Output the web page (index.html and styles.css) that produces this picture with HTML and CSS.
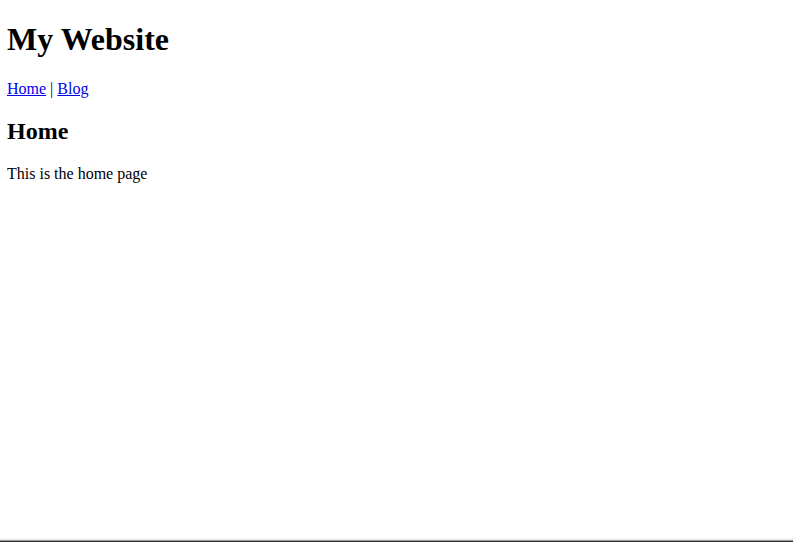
FILE: index.html
```html
<!DOCTYPE html>
<html>
<head>
<meta charset="utf-8">
<title>My Website</title>
<link rel="stylesheet" href="styles.css">
</head>
<body>
<h1 class="site-title">My Website</h1>
<p class="nav"><a href="#">Home</a> | <a href="#">Blog</a></p>
<h2 class="page-title">Home</h2>
<p class="content">This is the home page</p>
<div class="edge"></div>
</body>
</html>
```
FILE: styles.css
```css
body {
  margin: 0 7px;
  padding-top: 1px;
  font-family: "Liberation Serif", "Times New Roman", serif;
  font-size: 16px;
  color: #000;
  background: #fff;
}
.site-title {
  font-size: 32px;
  margin: 20.44px 0 21.44px;
}
.page-title {
  font-size: 24px;
  margin: 19.92px 0;
}
.nav, .content {
  margin: 16px 0;
}
.nav a {
  color: #0000ee;
}
.edge {
  position: fixed;
  left: 0;
  right: 0;
  bottom: 0;
  height: 4px;
  background: linear-gradient(to bottom, #f6f6f6 0, #f6f6f6 25%, #e8e8e8 25%, #e8e8e8 50%, #9a9a9a 50%, #9a9a9a 75%, #333 75%);
}
```
